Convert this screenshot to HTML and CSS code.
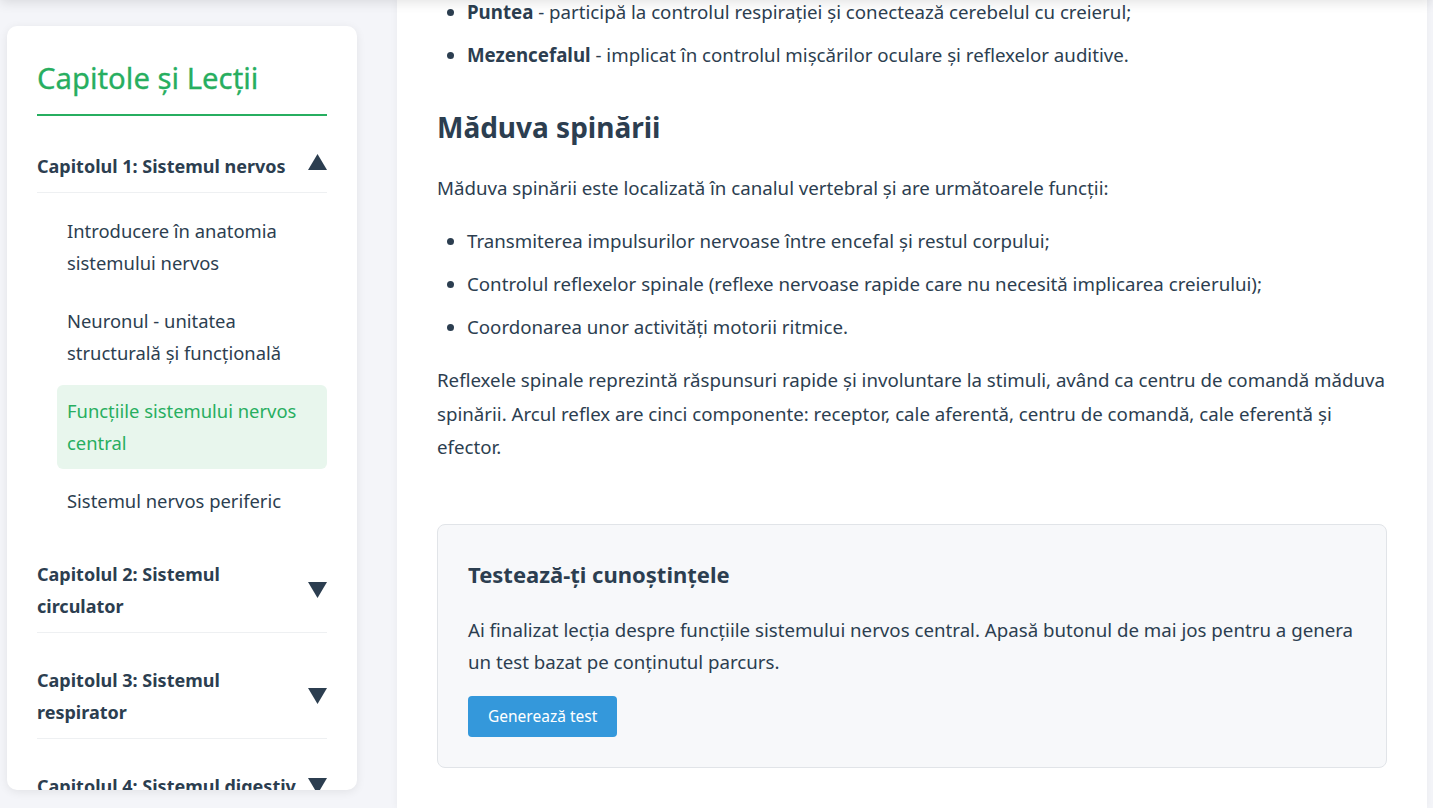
FILE: index.html
```html
<!DOCTYPE html>
<html lang="ro">
<head>
<meta charset="utf-8">
<title>Funcțiile sistemului nervos central</title>
<link rel="stylesheet" href="styles.css">
</head>
<body>
<header class="app-header"></header>
<div class="layout">
  <aside class="sidebar">
    <h2 class="sidebar-title">Capitole și Lecții</h2>

    <div class="chapter">
      <div class="chapter-header">
        <span class="chapter-name">Capitolul 1: Sistemul nervos</span>
        <svg class="caret caret-up" viewBox="0 0 19 16"><polygon points="9.5,0 19,16 0,16"/></svg>
      </div>
      <ul class="lessons">
        <li class="lesson">Introducere în anatomia sistemului nervos</li>
        <li class="lesson">Neuronul - unitatea structurală și funcțională</li>
        <li class="lesson active">Funcțiile sistemului nervos central</li>
        <li class="lesson">Sistemul nervos periferic</li>
      </ul>
    </div>

    <div class="chapter">
      <div class="chapter-header">
        <span class="chapter-name">Capitolul 2: Sistemul circulator</span>
        <svg class="caret" viewBox="0 0 19 16"><polygon points="0,0 19,0 9.5,16"/></svg>
      </div>
    </div>

    <div class="chapter">
      <div class="chapter-header">
        <span class="chapter-name">Capitolul 3: Sistemul respirator</span>
        <svg class="caret" viewBox="0 0 19 16"><polygon points="0,0 19,0 9.5,16"/></svg>
      </div>
    </div>

    <div class="chapter">
      <div class="chapter-header">
        <span class="chapter-name">Capitolul 4: Sistemul digestiv</span>
        <svg class="caret" viewBox="0 0 19 16"><polygon points="0,0 19,0 9.5,16"/></svg>
      </div>
    </div>
  </aside>

  <main class="content">
    <article class="lesson-body">
      <ul class="list-top">
        <li><strong>Puntea</strong> - participă la controlul respirației și conectează cerebelul cu creierul;</li>
        <li><strong>Mezencefalul</strong> - implicat în controlul mișcărilor oculare și reflexelor auditive.</li>
      </ul>

      <h2>Măduva spinării</h2>
      <p>Măduva spinării este localizată în canalul vertebral și are următoarele funcții:</p>
      <ul>
        <li>Transmiterea impulsurilor nervoase între encefal și restul corpului;</li>
        <li>Controlul reflexelor spinale (reflexe nervoase rapide care nu necesită implicarea creierului);</li>
        <li>Coordonarea unor activități motorii ritmice.</li>
      </ul>
      <p>Reflexele spinale reprezintă răspunsuri rapide și involuntare la stimuli, având ca centru de comandă măduva spinării. Arcul reflex are cinci componente: receptor, cale aferentă, centru de comandă, cale eferentă și efector.</p>

      <section class="quiz-box">
        <h3>Testează-ți cunoștințele</h3>
        <p>Ai finalizat lecția despre funcțiile sistemului nervos central. Apasă butonul de mai jos pentru a genera un test bazat pe conținutul parcurs.</p>
        <button class="quiz-button" type="button">Generează test</button>
      </section>
    </article>
  </main>
</div>
</body>
</html>
```

FILE: styles.css
```css
* {
  box-sizing: border-box;
}

html,
body {
  margin: 0;
  padding: 0;
}

body {
  font-family: "Noto Sans", "Open Sans", sans-serif;
  font-size: 18.4px;
  color: #2c3e50;
  background: #f4f5f9;
  height: 808px;
  overflow: hidden;
}

.app-header {
  position: fixed;
  top: -60px;
  left: 0;
  right: 0;
  height: 60px;
  background: #fff;
  box-shadow: 0 2px 12px rgba(0, 0, 0, 0.12);
  z-index: 5;
}

.layout {
  display: flex;
  align-items: flex-start;
  gap: 40px;
  padding-left: 7px;
}

/* Sidebar */
.sidebar {
  flex: 0 0 350px;
  margin-top: 26px;
  height: 764px;
  overflow: hidden;
  background: #fff;
  border-radius: 10px;
  box-shadow: 0 2px 10px rgba(0, 0, 0, 0.08);
  padding: 30px;
}

.sidebar-title {
  margin: 0 0 19px;
  font-size: 29.3px;
  font-weight: 400;
  line-height: 45px;
  color: #27ae60;
  padding-bottom: 13px;
  border-bottom: 2px solid #27ae60;
  -webkit-text-stroke: 0.3px #27ae60;
}

.chapter {
  margin-bottom: 16px;
}

.chapter-header {
  display: flex;
  align-items: center;
  justify-content: space-between;
  gap: 4px;
  padding: 15px 0 10px;
  border-bottom: 1px solid #eef0f2;
  font-size: 18px;
  font-weight: 700;
  line-height: 32px;
}

.chapter-name {
  flex: 1 1 auto;
}

.caret {
  flex: 0 0 19px;
  width: 19px;
  height: 16px;
  fill: #2c3e50;
}

.caret-up {
  margin-top: -8px;
}

.lessons {
  list-style: none;
  margin: 12px 0 0 20px;
  padding: 0;
}

.lesson {
  padding: 10px;
  margin-bottom: 6px;
  line-height: 32px;
  border-radius: 6px;
  color: #2c3e50;
}

.lesson.active {
  background: #e8f6ed;
  color: #27ae60;
}

/* Main content */
.content {
  flex: 0 0 1030px;
  min-height: 808px;
  background: #fff;
  padding: 0 40px;
  box-shadow: 0 0 8px rgba(0, 0, 0, 0.05);
}

.lesson-body {
  font-size: 18.7px;
}

.lesson-body ul {
  margin: 0 0 20px;
  padding-left: 30px;
}

.lesson-body .list-top {
  margin-top: -5px;
}

.lesson-body li {
  line-height: 33.5px;
  margin-bottom: 9.5px;
}

.lesson-body h2 {
  font-size: 28px;
  font-weight: 700;
  line-height: 36px;
  margin: 37.5px 0 26px;
}

.lesson-body p {
  margin: 0 0 19px;
  line-height: 33.5px;
}

.quiz-box {
  margin-top: 60px;
  background: #f7f8fa;
  border: 1px solid #e1e4e8;
  border-radius: 8px;
  padding: 30px 25px 30px 30px;
}

.quiz-box h3 {
  margin: 0 0 20px;
  font-size: 22px;
  font-weight: 700;
  line-height: 39.6px;
}

.quiz-box p {
  margin: 0 0 18px;
  line-height: 32px;
}

.quiz-button {
  display: inline-block;
  font-family: inherit;
  font-size: 15.5px;
  line-height: 21px;
  padding: 10px 20px;
  color: #fff;
  background: #3498db;
  border: none;
  border-radius: 4px;
  cursor: pointer;
}
```
